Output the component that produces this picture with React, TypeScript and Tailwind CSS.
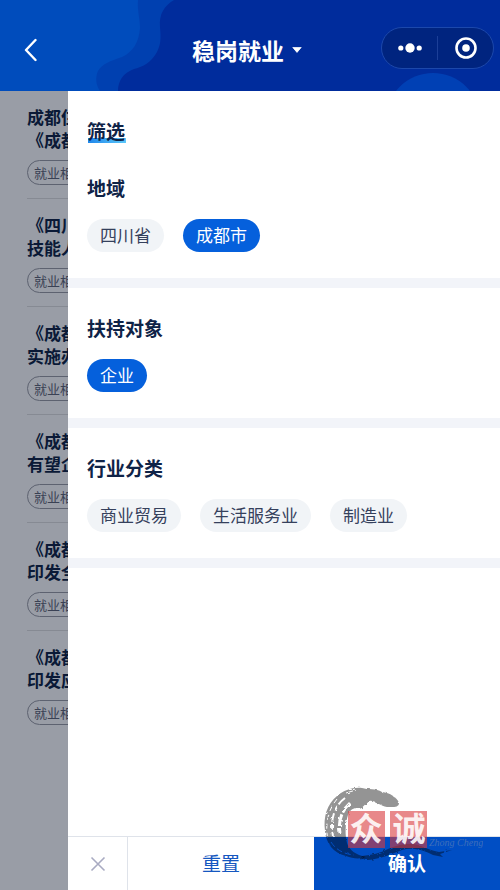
import React, { useState } from 'react';

const policies = [
  { lines: ['成都住', '《成都'], tag: '就业相关' },
  { lines: ['《四川', '技能人'], tag: '就业相关' },
  { lines: ['《成都', '实施办'], tag: '就业相关' },
  { lines: ['《成都', '有望企'], tag: '就业相关' },
  { lines: ['《成都', '印发全'], tag: '就业相关' },
  { lines: ['《成都', '印发应'], tag: '就业相关' },
];

const filters = [
  { title: '地域', options: ['四川省', '成都市'] },
  { title: '扶持对象', options: ['企业'] },
  { title: '行业分类', options: ['商业贸易', '生活服务业', '制造业'] },
];

const defaultSelected = ['成都市', '企业'];

const Header: React.FC = () => (
  <header className="relative h-[91px] shrink-0 overflow-hidden bg-[#002c9c]">
    {/* Wave background */}
    <svg
      className="absolute inset-0 h-full w-full"
      viewBox="0 0 500 91"
      preserveAspectRatio="xMidYMid slice"
      aria-hidden="true"
    >
      <path
        d="M0 0H174C164 6 159 14 160 27C161 38 161 44 157 52C151 63 142 67 134 69C123 73 118 81 118 91H0Z"
        fill="#0040b0"
      />
      <path
        d="M0 0H138C137 10 140 18 140 28C139 42 133 52 122 57C110 61 102 64 98 71C95 78 96 85 100 91H0Z"
        fill="#004cbc"
      />
      <circle cx="433" cy="120" r="47" fill="#0040b4" />
    </svg>

    <div className="relative grid h-full grid-cols-[1fr_auto_1fr] items-center pt-2 pr-1.5">
      <button type="button" aria-label="返回" className="w-fit pl-6">
        <svg width="13" height="24" viewBox="0 0 13 24" fill="none" aria-hidden="true">
          <path
            d="M11.5 2L2 12L11.5 22"
            stroke="#fff"
            strokeWidth="2.4"
            strokeLinecap="round"
            strokeLinejoin="round"
          />
        </svg>
      </button>

      <button type="button" className="flex items-center gap-2 text-[23px] leading-8 font-bold text-white">
        <span>稳岗就业</span>
        <svg width="10" height="6" viewBox="0 0 10 6" aria-hidden="true">
          <path d="M0.8 0.4H9.2L5 5.4Z" fill="#fff" stroke="#fff" strokeWidth="0.8" strokeLinejoin="round" />
        </svg>
      </button>

      <div className="mb-1 flex h-[42px] w-[113px] items-center justify-self-end rounded-full border border-[#1c48ab] bg-[#00247f]">
        <button type="button" aria-label="更多" className="flex flex-1 justify-center">
          <svg width="24" height="10" viewBox="0 0 24 10" fill="#fff" aria-hidden="true">
            <circle cx="2.8" cy="5" r="2.6" />
            <circle cx="12" cy="5" r="4.7" />
            <circle cx="21.2" cy="5" r="2.6" />
          </svg>
        </button>
        <span className="h-6 w-px bg-[#1c3f98]" />
        <button type="button" aria-label="关闭" className="flex flex-1 justify-center">
          <svg width="22" height="22" viewBox="0 0 22 22" aria-hidden="true">
            <circle cx="11" cy="11" r="9.5" fill="none" stroke="#fff" strokeWidth="2.6" />
            <circle cx="11" cy="11" r="3.8" fill="#fff" />
          </svg>
        </button>
      </div>
    </div>
  </header>
);

const PolicyList: React.FC = () => (
  <ul className="w-[68px] shrink-0 overflow-hidden bg-[#999da6] pl-[27px] whitespace-nowrap">
    {policies.map((policy, i) => (
      <li key={i} className="border-b border-[#868a93] pt-3.5 pb-[13px] last:border-b-0">
        <h3 className="text-[17px] leading-[23px] font-bold text-[#0a1936]">
          {policy.lines[0]}
          <br />
          {policy.lines[1]}
        </h3>
        <span className="mt-[9px] flex h-[25px] w-max items-center rounded-full border border-[#5d6270] px-1.5 text-[13px] text-[#3a4154]">
          {policy.tag}
        </span>
      </li>
    ))}
  </ul>
);

const Watermark: React.FC = () => (
  <svg
    className="pointer-events-none absolute right-[17px] bottom-[27px]"
    width="163"
    height="80"
    viewBox="320 783 163 80"
    aria-hidden="true"
  >
    <defs>
      <filter id="rough" x="-5%" y="-5%" width="110%" height="110%">
        <feTurbulence type="fractalNoise" baseFrequency="0.25" numOctaves="2" seed="4" />
        <feDisplacementMap in="SourceGraphic" scale="3" />
      </filter>
      {/* Dry-brush gaps in the ink */}
      <mask id="brush" maskUnits="userSpaceOnUse" x="315" y="780" width="170" height="85">
        <rect x="315" y="780" width="170" height="85" fill="#fff" />
        <g fill="none" stroke="#000" filter="url(#rough)">
          <path d="M345 798C334 806 330 820 333 836" strokeWidth="2" strokeDasharray="9 2 5 3" />
          <path d="M337 799C327 811 325 826 328 840" strokeWidth="1" strokeDasharray="5 4" />
          <path d="M350 803C341 811 338 822 340 833" strokeWidth="3" strokeDasharray="12 2" />
          <path d="M331 842C336 850 344 854 354 855" strokeWidth="1" strokeDasharray="6 3" />
          <path d="M346 793L356 790" strokeWidth="1" />
        </g>
      </mask>
    </defs>
    {/* Ink ring */}
    <g mask="url(#brush)">
      <g fill="#000" fillOpacity="0.42" filter="url(#rough)">
        <path d="M399 803C397 797 390 793 382 792C376 788 368 790 362 788C353 787 344 790 337 796C327 804 323 817 325 831C326 843 333 853 346 856C353 859 361 859 366 857C356 855 349 850 347 843C345 835 345 824 348 815C350 810 354 807 359 809C364 808 364 803 370 802C376 801 380 806 387 807C392 807 399 808 399 803Z" />
        <path d="M362 856C372 855 380 853 388 849C397 845 410 842 421 846C428 849 433 851 439 852L452 850L440 854L443 857L433 855C424 850 412 847 402 850C392 854 380 859 368 860C364 860 360 858 362 856Z" />
      </g>
    </g>
    {/* Seals */}
    <g fill="#d8383c" fillOpacity="0.6">
      <rect x="348" y="811" width="37" height="37" />
      <rect x="390" y="811" width="37" height="37" />
    </g>
    <g
      fill="#fff"
      fillOpacity="0.9"
      fontFamily="'Noto Sans CJK SC', sans-serif"
      fontSize="33"
      fontWeight="700"
      textAnchor="middle"
    >
      <text x="366" y="841">众</text>
      <text x="409" y="841">诚</text>
    </g>
    <text
      x="429"
      y="846"
      fill="#5c7fb6"
      fillOpacity="0.7"
      fontFamily="'Liberation Serif', serif"
      fontSize="10"
      fontStyle="italic"
    >
      Zhong Cheng
    </text>
  </svg>
);

export default function App() {
  const [selected, setSelected] = useState<string[]>(defaultSelected);

  const toggle = (option: string) =>
    setSelected((prev) => (prev.includes(option) ? prev.filter((o) => o !== option) : [...prev, option]));

  return (
    <div className="flex min-h-screen flex-col bg-white font-['Noto_Sans_CJK_SC',sans-serif]">
      <Header />

      <div className="flex flex-1">
        <PolicyList />

        {/* Filter drawer */}
        <main className="relative flex min-w-0 flex-1 flex-col bg-white">
          <div className="px-[19px] pt-7">
            <h2 className="relative w-fit text-[19px] leading-6 font-bold text-[#0f2347]">
              <span className="absolute bottom-0 left-px h-[5px] w-full bg-linear-to-r from-[#1f86ea] to-[#5cc8fa]" />
              <span className="relative">筛选</span>
            </h2>
          </div>

          {filters.map((group, i) => (
            <section
              key={group.title}
              className={`border-b-10 border-[#f2f4f9] px-[19px] pb-[26px] ${i === 0 ? 'pt-[33px]' : 'pt-7'}`}
            >
              <h3 className="text-[19px] leading-6 font-bold text-[#0f2347]">{group.title}</h3>
              <div className="mt-[19px] flex flex-wrap gap-x-[19px] gap-y-3">
                {group.options.map((option) => {
                  const active = selected.includes(option);
                  return (
                    <button
                      key={option}
                      type="button"
                      aria-pressed={active}
                      onClick={() => toggle(option)}
                      className={`h-[33px] rounded-full px-[13px] pb-0.5 text-[17px] leading-6 ${
                        active ? 'bg-[#0560dc] text-white' : 'bg-[#f1f4f7] text-[#35405c]'
                      }`}
                    >
                      {option}
                    </button>
                  );
                })}
              </div>
            </section>
          ))}

          <footer className="mt-auto flex h-[54px] border-t border-[#dfe3ea]">
            <button
              type="button"
              aria-label="关闭筛选"
              className="flex w-[60px] items-center justify-center border-r border-[#dfe3ea]"
            >
              <svg width="16" height="16" viewBox="0 0 16 16" aria-hidden="true">
                <path d="M1.5 1.5L14.5 14.5M14.5 1.5L1.5 14.5" stroke="#a9abc2" strokeWidth="1.6" />
              </svg>
            </button>
            <button
              type="button"
              onClick={() => setSelected(defaultSelected)}
              className="flex-1 text-[19px] text-[#1557c0]"
            >
              重置
            </button>
            <button type="button" className="flex-1 bg-[#004ec4] text-[19px] font-bold text-white">
              确认
            </button>
          </footer>

          <Watermark />
        </main>
      </div>
    </div>
  );
}
